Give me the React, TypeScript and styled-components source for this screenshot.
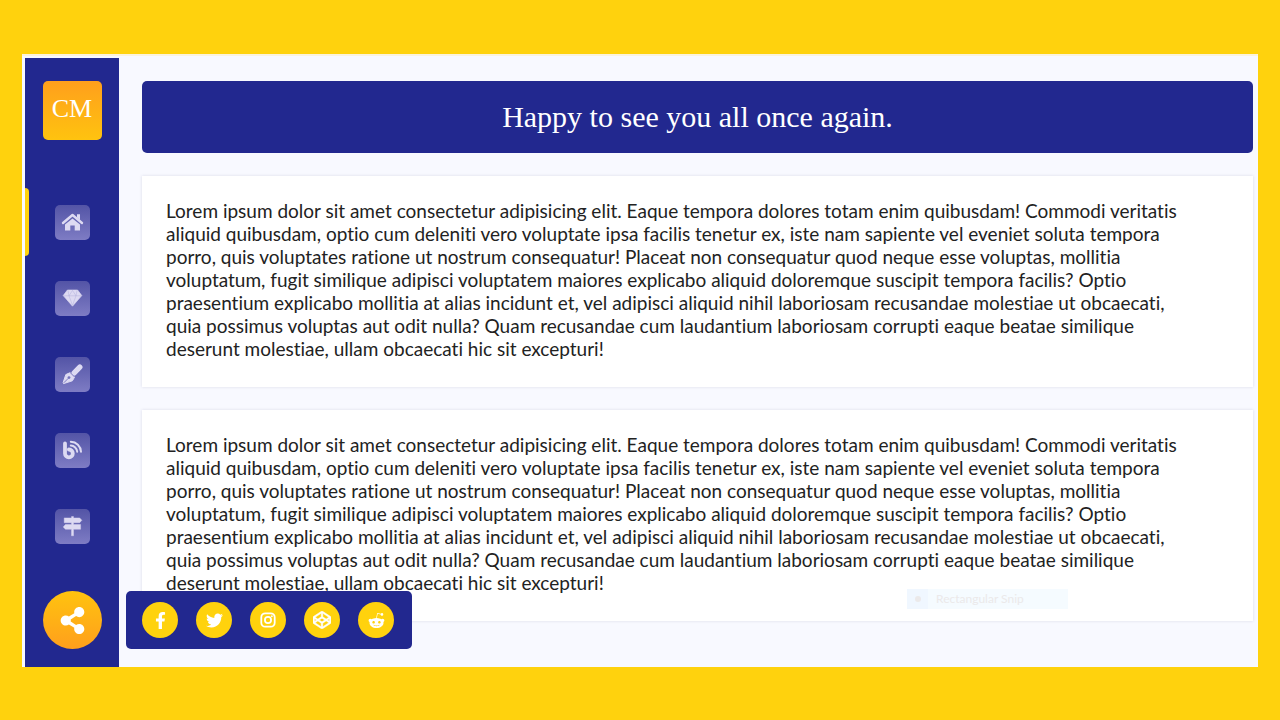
import React from "react";
import styled, { createGlobalStyle } from "styled-components";
import {
  FaShareAlt,
  FaFacebookF,
  FaTwitter,
  FaCodepen,
  FaRedditAlien,
} from "react-icons/fa";

const colors = {
  yellow: "#ffd20d",
  orange: "#ff9f1c",
  blue: "#22288f",
  page: "#f8f9ff",
};

const GlobalStyle = createGlobalStyle`
  * { box-sizing: border-box; }
  body {
    margin: 0;
    background: ${colors.yellow};
    font-family: Lato, "Liberation Sans", sans-serif;
  }
`;

const Page = styled.div`
  min-height: 100vh;
  padding: 54px 22px 53px;
  background: ${colors.yellow};
`;

const Frame = styled.div`
  display: flex;
  padding: 2px 5px 0 3px;
  border-top: 2px solid #fbf3dc;
  background: ${colors.page};
`;

const Sidebar = styled.aside`
  position: relative;
  flex: none;
  width: 94px;
  padding: 23px 0 18px;
  display: flex;
  flex-direction: column;
  align-items: center;
  justify-content: space-between;
  background: ${colors.blue};
`;

const Logo = styled.a`
  display: flex;
  align-items: center;
  justify-content: center;
  width: 59px;
  height: 59px;
  padding-bottom: 4px;
  border-radius: 5px;
  background: linear-gradient(${colors.orange}, #ffc30f);
  color: #fff;
  font: 26px "Liberation Serif", serif;
  text-decoration: none;
`;

const Nav = styled.nav`
  display: flex;
  flex-direction: column;
  gap: 8px;
  width: 100%;
  margin-top: 17px;
`;

const NavLink = styled.a<{ $active?: boolean }>`
  position: relative;
  display: flex;
  align-items: center;
  justify-content: center;
  height: 68px;
  &::before {
    content: "";
    display: ${(p) => (p.$active ? "block" : "none")};
    position: absolute;
    inset: 0 auto 0 0;
    width: 4px;
    border-radius: 0 4px 4px 0;
    background: ${colors.yellow};
  }
`;

const NavIcon = styled.svg`
  width: 35px;
  height: 35px;
  border-radius: 5px;
  background: linear-gradient(#5354a6, #7e7cc4);
  color: #dddaf2;
`;

const ShareButton = styled.button`
  display: flex;
  align-items: center;
  justify-content: center;
  width: 59px;
  height: 58px;
  padding: 0;
  border: 0;
  border-radius: 50%;
  background: linear-gradient(#ffc30f, ${colors.orange});
  color: #fff;
  font-size: 27px;
`;

const SocialPanel = styled.div`
  position: absolute;
  left: 101px;
  bottom: 18px;
  z-index: 1;
  display: flex;
  align-items: center;
  gap: 18px;
  height: 58px;
  padding: 0 18px 0 16px;
  border-radius: 5px;
  background: ${colors.blue};
`;

const SocialLink = styled.a`
  display: flex;
  align-items: center;
  justify-content: center;
  width: 36px;
  height: 36px;
  border-radius: 50%;
  background: ${colors.yellow};
  color: #fff;
  font-size: 17px;
`;

const Main = styled.main`
  flex: 1;
  min-width: 0;
  display: flex;
  flex-direction: column;
  gap: 23px;
  padding: 23px 0 46px 23px;
`;

const Banner = styled.h1`
  margin: 0;
  padding: 16px;
  border-radius: 5px;
  background: ${colors.blue};
  color: #fff;
  font: 400 30px/40px "Liberation Serif", serif;
  text-align: center;
`;

const Card = styled.section`
  position: relative;
  padding: 23px 24px 27px;
  background: #fff;
  box-shadow: 0 0 3px rgba(40, 40, 90, 0.14);
`;

const CardText = styled.p`
  margin: 0;
  color: #222;
  font-size: 19px;
  line-height: 23px;
  font-variant-ligatures: none;
`;

const SnipHint = styled.div`
  position: absolute;
  right: 185px;
  bottom: 12px;
  display: flex;
  align-items: center;
  width: 161px;
  height: 20px;
  background: #f5fbff;
  color: #ebe9ea;
  font-size: 12px;
  line-height: 14px;
`;

const SnipMark = styled.span`
  display: flex;
  align-items: center;
  justify-content: center;
  width: 21px;
  height: 20px;
  margin-right: 8px;
  background: #f0f7ff;
  &::before {
    content: "";
    width: 6px;
    height: 6px;
    border-radius: 50%;
    background: #ebe9ea;
  }
`;

const HomeShape = () => (
  <>
    <path d="M8 18 17.5 10 27 18" fill="none" stroke="currentColor" strokeWidth="2.4" strokeLinecap="round" strokeLinejoin="round" />
    <path d="M22 9.2h3v6l-3-2.6z" fill="currentColor" />
    <path d="M17.5 13.4 25 19.6V25.4H19.7V20.4H15.3V25.4H10V19.6z" fill="currentColor" />
  </>
);

const GemShape = () => (
  <>
    <path d="M12.4 9h10.2l4.2 5.6L17.5 25.2 8.2 14.6z" fill="currentColor" stroke="currentColor" strokeWidth=".6" strokeLinejoin="round" />
    <path d="M9 14.8h17M13 9.4l1 5.4 3.5 9.6 3.5-9.6 1-5.4M14 14.8 17.5 9.4 21 14.8" fill="none" stroke="#aaa6da" strokeWidth=".4" />
  </>
);

const PenShape = () => (
  <>
    <path d="M19.2 15.8 24.8 10.2" stroke="currentColor" strokeWidth="5.4" strokeLinecap="round" />
    <path d="M15.2 15.6 19.6 20 17.4 23.8 8.6 26.6 8 26 10.8 17.6z" fill="currentColor" stroke="currentColor" strokeLinejoin="round" />
    <path d="M8.8 25.8 13.4 21.2M15 15.4 19.8 20.2" stroke="#7573bc" strokeWidth=".9" />
    <circle cx="14" cy="20.6" r="1.4" fill="#7573bc" />
  </>
);

const BlogShape = () => (
  <g fill="none" stroke="currentColor" strokeLinecap="round">
    <path d="M10 10.4V20.4a3.9 3.9 0 1 0 3.9-3.9" strokeWidth="3.8" />
    <path d="M15.8 8.8a10.4 10.4 0 0 1 10.2 10" strokeWidth="2" />
    <path d="M15.8 12.6a6.6 6.6 0 0 1 6.4 6.2" strokeWidth="2" />
  </g>
);

const SignsShape = () => (
  <path
    d="M16.5 7.6h2v1.3h6.2l2.2 2.4-2.2 2.4H18.5v1.8h7.1v4.8H18.5V26.8h-2V20.3H10.4L8.2 17.9l2.2-2.4h6.1V13.7H9.2V8.9h7.3z"
    fill="currentColor"
    stroke="currentColor"
    strokeWidth=".4"
    strokeLinejoin="round"
  />
);

const InstagramIcon = () => (
  <svg width="16" height="16" viewBox="0 0 16 16" fill="none" stroke="currentColor" strokeWidth="1.8">
    <rect x="1.3" y="1.3" width="13.4" height="13.4" rx="4" />
    <circle cx="8" cy="8" r="3.1" />
    <circle cx="11.9" cy="4.2" r=".9" fill="currentColor" stroke="none" />
  </svg>
);

const CodepenIcon = () => <FaCodepen size={18} stroke="currentColor" strokeWidth={14} />;

const navItems = [
  { label: "Home", Shape: HomeShape },
  { label: "Gems", Shape: GemShape },
  { label: "Design", Shape: PenShape },
  { label: "Blog", Shape: BlogShape },
  { label: "Directions", Shape: SignsShape },
];

const socials = [
  { label: "Facebook", Icon: FaFacebookF },
  { label: "Twitter", Icon: FaTwitter },
  { label: "Instagram", Icon: InstagramIcon },
  { label: "CodePen", Icon: CodepenIcon },
  { label: "Reddit", Icon: FaRedditAlien },
];

const lorem = [
  "Lorem ipsum dolor sit amet consectetur adipisicing elit. Eaque tempora dolores totam enim quibusdam! Commodi veritatis",
  "aliquid quibusdam, optio cum deleniti vero voluptate ipsa facilis tenetur ex, iste nam sapiente vel eveniet soluta tempora",
  "porro, quis voluptates ratione ut nostrum consequatur! Placeat non consequatur quod neque esse voluptas, mollitia",
  "voluptatum, fugit similique adipisci voluptatem maiores explicabo aliquid doloremque suscipit tempora facilis? Optio",
  "praesentium explicabo mollitia at alias incidunt et, vel adipisci aliquid nihil laboriosam recusandae molestiae ut obcaecati,",
  "quia possimus voluptas aut odit nulla? Quam recusandae cum laudantium laboriosam corrupti eaque beatae similique",
  "deserunt molestiae, ullam obcaecati hic sit excepturi!",
];

const Lorem = () => (
  <CardText>
    {lorem.map((line, i) => (
      <React.Fragment key={i}>
        {i > 0 && <br />}
        {line}
      </React.Fragment>
    ))}
  </CardText>
);

export default function App() {
  return (
    <Page>
      <GlobalStyle />
      <Frame>
        <Sidebar>
          <Logo href="#">CM</Logo>
          <Nav>
            {navItems.map(({ label, Shape }, i) => (
              <NavLink key={label} href="#" aria-label={label} $active={i === 0}>
                <NavIcon viewBox="0 0 35 35">
                  <Shape />
                </NavIcon>
              </NavLink>
            ))}
          </Nav>
          <ShareButton type="button" aria-label="Share">
            <FaShareAlt />
          </ShareButton>
          <SocialPanel>
            {socials.map(({ label, Icon }) => (
              <SocialLink key={label} href="#" aria-label={label}>
                <Icon />
              </SocialLink>
            ))}
          </SocialPanel>
        </Sidebar>
        <Main>
          <Banner>Happy to see you all once again.</Banner>
          <Card>
            <Lorem />
          </Card>
          <Card>
            <Lorem />
            <SnipHint>
              <SnipMark />
              Rectangular Snip
            </SnipHint>
          </Card>
        </Main>
      </Frame>
    </Page>
  );
}
